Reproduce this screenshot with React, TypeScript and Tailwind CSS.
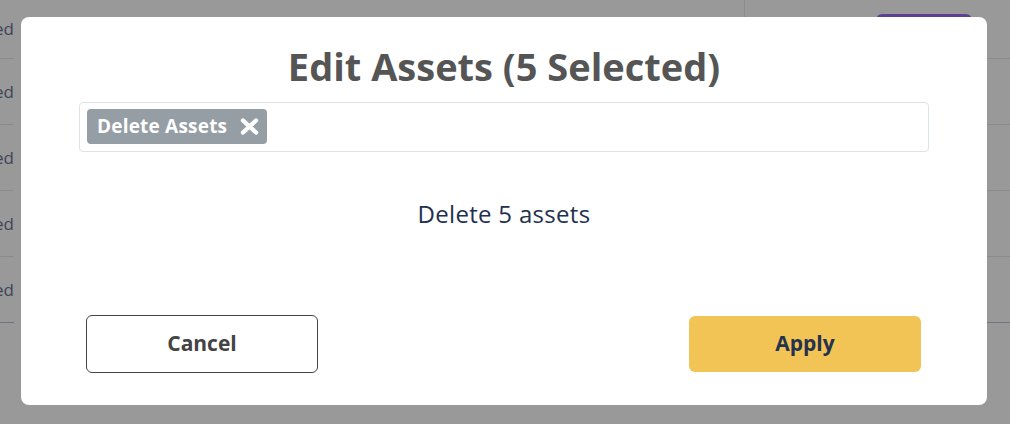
import React from 'react';

const rows = ['Completed', 'Completed', 'Completed', 'Completed', 'Completed'];

const font = { fontFamily: '"Open Sans", "Noto Sans", sans-serif' };

const RemoveIcon = () => (
  <svg viewBox="0 0 19 17" className="h-[17px] w-[19px]" fill="none">
    <path d="M3 2.5 L16 14.5 M16 2.5 L3 14.5" stroke="white" strokeWidth="4.4" strokeLinecap="round" />
  </svg>
);

export default function App() {
  return (
    <div className="relative h-[424px] w-[1010px] overflow-hidden bg-[#999999]" style={font}>
      {/* Dimmed page behind the dialog */}
      <div className="flex">
        <div className="flex w-[745px] flex-col border-r border-[#8c8c8c]">
          {rows.map((r, i) => (
            <div
              key={i}
              className={`flex ${i === 0 ? 'h-[59px]' : 'h-[66px]'} items-center justify-end border-b ${i === rows.length - 1 ? 'border-[#70737d]' : 'border-[#8a8a8a]'} w-[14px] overflow-hidden`}
            >
              <span className="whitespace-nowrap text-[17px] text-[#3d4557]">{r}</span>
            </div>
          ))}
        </div>
        <div className="flex flex-1 flex-col">
          <div className="flex h-[59px] items-start border-b border-[#8a8a8a] pl-[131px] pt-[14px]">
            <div className="h-[34px] w-[96px] rounded-md bg-[#5f3f91]" />
          </div>
          <div className="h-[66px] border-b border-[#8a8a8a]" />
          <div className="h-[66px] border-b border-[#8a8a8a]" />
          <div className="h-[66px] border-b border-[#8a8a8a]" />
          <div className="h-[66px] border-b border-[#70737d]" />
        </div>
      </div>

      {/* Dialog */}
      <div className="absolute left-[21px] top-[17px] flex h-[388px] w-[966px] flex-col rounded-lg bg-white">
        <h2 className="mt-[26px] text-center text-[38px] font-bold leading-[46px] text-[#555555]">
          Edit Assets (5 Selected)
        </h2>
        <div className="mx-[58px] mt-[13px] flex h-[50px] items-start rounded border border-[#dde3e8] pl-[7px] pt-[6px]">
          <span className="flex h-[35px] items-center gap-[13px] rounded bg-[#959da5] pl-[10px] pr-[8px] text-[19px] font-bold tracking-[0.2px] text-white">
            Delete Assets
            <RemoveIcon />
          </span>
        </div>
        <p className="mt-[47px] text-center text-[24px] font-medium leading-[30px] tracking-[0.3px] text-[#22304f]">
          Delete 5 assets
        </p>
        <div className="mb-[32px] mt-auto flex items-center justify-between pl-[65px] pr-[66px]">
          <button className="h-[58px] w-[232px] rounded-md border border-[#444444] bg-white text-[21px] font-bold text-[#444444]">
            Cancel
          </button>
          <button className="h-[56px] w-[232px] rounded-md bg-[#f2c455] text-[21px] font-bold text-[#24324f]">
            Apply
          </button>
        </div>
      </div>
    </div>
  );
}
